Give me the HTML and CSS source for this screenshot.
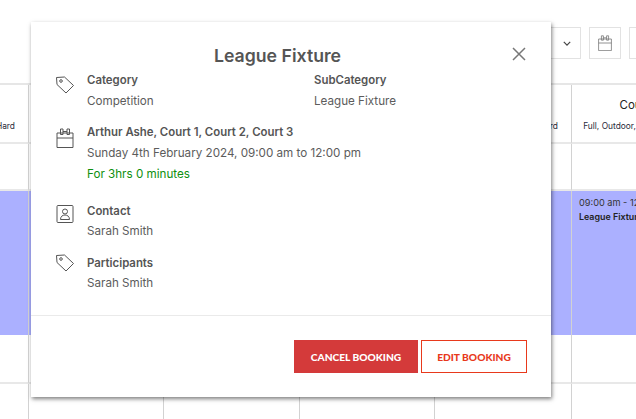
FILE: index.html
```html
<!DOCTYPE html>
<html lang="en">
<head>
<meta charset="utf-8">
<title>League Fixture</title>
<link rel="stylesheet" href="styles.css">
</head>
<body>
<div class="page">
  <div class="toolbar">
    <div class="select"><svg class="chev" viewBox="0 0 10 6"><path d="M1 1l4 4 4-4"/></svg></div>
    <div class="tool"><svg class="tool-icon" viewBox="0 0 20 20"><path d="M2 5h16v14.500H2zM2 10h16M5.500 6.500V1h2.500v5.500H5.500zM12 6.500V1h2.500v5.500H12zM8 3.500h4"/></svg></div>
    <div class="tool"></div>
  </div>
  <div class="grid">
    <div class="cell head end"><span class="sub">Full, Outdoor, Synthetic Hard</span></div>
    <div class="cell head"></div>
    <div class="cell head"></div>
    <div class="cell head"></div>
    <div class="cell head end"><span class="sub">Full, Outdoor, Synthetic Hard</span></div>
    <div class="cell head last"><span class="court">Court 4</span><span class="sub">Full, Outdoor, Synthetic Hard</span></div>
    <div class="cell"></div><div class="cell"></div><div class="cell"></div><div class="cell"></div><div class="cell"></div><div class="cell last"></div>
    <div class="cell booked"></div><div class="cell booked"></div><div class="cell booked"></div><div class="cell booked"></div><div class="cell booked"></div>
    <div class="cell booked last"><span class="time">09:00 am - 12:00 pm</span><b class="event">League Fixture</b></div>
    <div class="cell"></div><div class="cell"></div><div class="cell"></div><div class="cell"></div><div class="cell"></div><div class="cell last"></div>
    <div class="cell"></div><div class="cell"></div><div class="cell"></div><div class="cell"></div><div class="cell"></div><div class="cell last"></div>
  </div>
</div>

<div class="modal">
  <h1 class="title">League Fixture</h1>
  <svg class="close" viewBox="0 0 14 14"><path d="M1 1l12 12M13 1L1 13"/></svg>
  <div class="body">
    <div class="row row-cat">
      <svg class="icon icon-cat" viewBox="0 0 20 20"><path d="M1.500 2.500l8-.5 9 8.500-7.500 7.500L2 9.500z"/><circle cx="6" cy="6" r="1.300"/></svg>
      <div class="col"><div class="label">Category</div><div class="value">Competition</div></div>
      <div class="col"><div class="label">SubCategory</div><div class="value">League Fixture</div></div>
    </div>
    <div class="row row-court">
      <svg class="icon icon-court" viewBox="0 0 20 20"><path d="M2 5h16v14.500H2zM2 10h16M5.500 6.500V1h2.500v5.500H5.500zM12 6.500V1h2.500v5.500H12zM8 3.500h4"/></svg>
      <div class="stack">
        <div class="label">Arthur Ashe, Court 1, Court 2, Court 3</div>
        <div class="value">Sunday 4th February 2024, 09:00 am to 12:00 pm</div>
        <div class="value green">For 3hrs 0 minutes</div>
      </div>
    </div>
    <div class="row row-contact">
      <svg class="icon icon-contact" viewBox="0 0 20 20"><rect x="2" y="1.500" width="16" height="17" rx="1"/><circle cx="10" cy="7.500" r="2.500"/><path d="M5.500 15.500c0-3 2-4.500 4.500-4.500s4.500 1.500 4.500 4.500z"/></svg>
      <div class="stack"><div class="label">Contact</div><div class="value tight">Sarah Smith</div></div>
    </div>
    <div class="row row-part">
      <svg class="icon icon-part" viewBox="0 0 20 20"><path d="M1.500 2.500l8-.5 9 8.500-7.500 7.500L2 9.500z"/><circle cx="6" cy="6" r="1.300"/></svg>
      <div class="stack"><div class="label">Participants</div><div class="value tight">Sarah Smith</div></div>
    </div>
  </div>
  <div class="footer">
    <button class="btn danger">CANCEL BOOKING</button>
    <button class="btn outline">EDIT BOOKING</button>
  </div>
</div>
</body>
</html>
```
FILE: styles.css
```css
* { box-sizing: border-box; }
html, body { margin: 0; padding: 0; }
body {
  width: 636px; height: 419px; overflow: hidden; background: #fff; position: relative;
  font-family: Inter, "Open Sans", "Liberation Sans", sans-serif; color: #555;
}
.page { width: 636px; height: 419px; overflow: hidden; }
.toolbar {
  height: 85px; padding: 27px 0 0 0; display: flex; justify-content: flex-end; gap: 8px;
  width: 661px; border-bottom: 2px solid #e6e6e6;
}
.select {
  width: 60px; height: 32px; border: 1px solid #e2e2e2; display: flex; align-items: center; justify-content: flex-end; padding-right: 9px;
}
.chev { width: 8px; height: 5px; fill: none; stroke: #444; stroke-width: 1.500; }
.tool { width: 32px; height: 32px; border: 1px solid #e2e2e2; display: flex; align-items: center; justify-content: center; }
.tool-icon { width: 16px; height: 16px; fill: none; stroke: #777; stroke-width: 1; }
.grid {
  display: grid; width: 708px;
  grid-template-columns: 29px 135px 136px 135px 137px 136px;
  grid-template-rows: 59px 47px 144px 49px 48px;
}
.cell { border-right: 1px solid #d2d2d2; border-bottom: 2px solid #e8e8e8; min-width: 0; overflow: hidden; white-space: nowrap; }
.last { border-right: 0; }
.head { display: flex; flex-direction: column; align-items: center; justify-content: flex-end; padding-bottom: 10px; }
.end { align-items: flex-end; padding-right: 13px; }
.court { font-size: 11.500px; line-height: 13px; color: #222; margin-bottom: 9px; }
.sub { font-size: 8.400px; line-height: 11px; color: #2a2a3a; }
.booked { background: #abb0ff; border-bottom: 0; }
.booked.last { padding: 5px 0 0 7px; display: flex; flex-direction: column; }
.time { font-size: 9.200px; color: #333; line-height: 14px; }
.event { font-size: 8.900px; font-weight: 600; color: #222; line-height: 14px; }

.modal {
  position: absolute; left: 31px; top: 22px; width: 520px; height: 375px;
  background: #fff; box-shadow: 1px 2px 4px rgba(0,0,0,.5);
  display: flex; flex-direction: column;
}
.title { margin: 24px 0 0; padding-right: 27px; height: 20px; font-size: 17.700px; line-height: 20px; font-weight: 600; color: #555; text-align: center; }
.close { position: absolute; left: 481px; top: 25px; width: 14px; height: 14px; fill: none; stroke: #777; stroke-width: 1.500; }
.body { flex: 1; padding: 0 24px; display: flex; flex-direction: column; }
.row { display: flex; }
.icon { width: 20px; height: 20px; flex: none; fill: none; stroke: #555; stroke-width: 1; margin-right: 12px; }
.icon-cat { margin-top: 3px; }
.icon-court { margin-top: 4px; }
.icon-contact { margin-top: 1px; }
.icon-part { margin-top: -2px; }
.col { width: 227px; flex: none; }
.label { font-size: 11.400px; font-weight: 600; line-height: 16px; color: #555; }
.value { font-size: 11.650px; line-height: 16px; margin-top: 5px; color: #5c5c5c; }
.tight { margin-top: 4px; }
.green { color: #0f8f0f; margin-top: 5px; }
.row-cat { margin-top: 6px; }
.row-court { margin-top: 15px; }
.row-contact { margin-top: 21px; }
.row-part { margin-top: 16px; }
.footer {
  height: 82px; border-top: 1px solid #eaeaea; display: flex; justify-content: flex-end; align-items: flex-start; gap: 3px; padding: 24px 24px 0 0;
}
.btn { height: 33px; font-family: Lato, "Liberation Sans", sans-serif; font-size: 10.200px; font-weight: 900; border-radius: 0; padding: 0; }
.danger { width: 124px; background: #d43a3a; border: 0; color: #fff; }
.outline { width: 106px; background: #fff; border: 1px solid #e8391c; color: #e8391c; }
```
